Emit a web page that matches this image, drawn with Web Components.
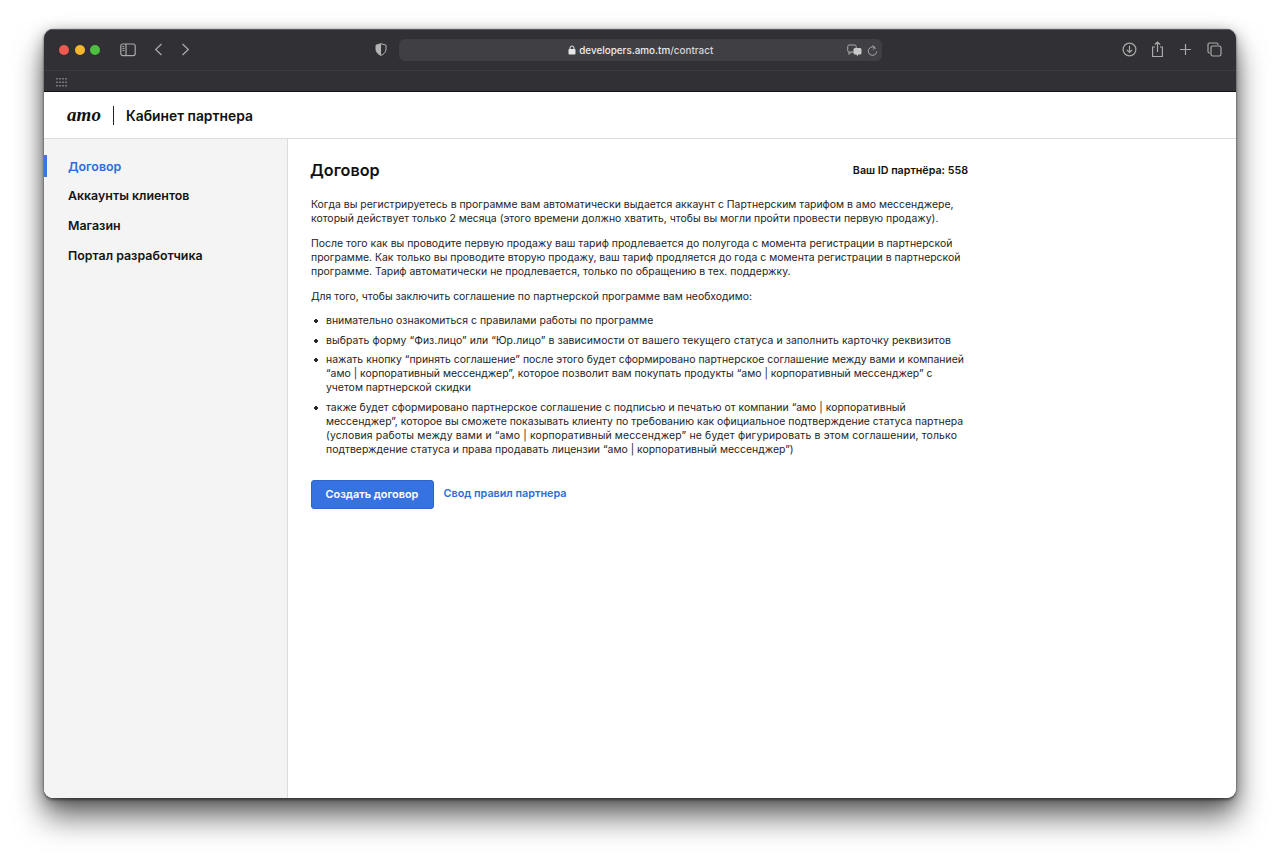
<!DOCTYPE html>
<html lang="ru"><head><meta charset="utf-8"><title>Договор</title>
<style>
html,body{margin:0;padding:0;background:#fff}
body{font-family:Inter,"Liberation Sans",sans-serif;width:1280px;height:856px;overflow:hidden}
</style></head><body>
<browser-window>
  <browser-toolbar slot="toolbar" url-host="developers.amo.tm" url-path="/contract"></browser-toolbar>
  <partner-header></partner-header>
  <div style="display:flex;flex:1;min-height:0">
    <partner-nav>
      <nav-item active>Договор</nav-item>
      <nav-item>Аккаунты клиентов</nav-item>
      <nav-item>Магазин</nav-item>
      <nav-item>Портал разработчика</nav-item>
    </partner-nav>
    <contract-page title-text="Договор" partner="Ваш ID партнёра: 558"></contract-page>
  </div>
</browser-window>
<script>
function def(name, html, extra){
  const t=document.createElement('template');t.innerHTML=html;
  customElements.define(name,class extends HTMLElement{
    connectedCallback(){ if(this.shadowRoot) return; this.attachShadow({mode:'open'}).appendChild(t.content.cloneNode(true)); if(extra) extra.call(this,this.shadowRoot);}
  });
}
def('browser-window',`<style>
:host{display:block;box-sizing:border-box;width:1280px;height:856px;padding:29px 44px 58px}
.w{height:769px;display:flex;flex-direction:column;border-radius:9px;overflow:hidden;background:#fff}
.s{height:769px;border-radius:9px;box-shadow:0 0 1px 0 rgba(40,40,40,.8),0 2px 3px rgba(0,0,0,.45),0 20px 30px rgba(0,0,0,.55),0 4px 16px rgba(0,0,0,.35)}
</style><div class="s"><div class="w"><slot name="toolbar"></slot><slot></slot></div></div>`);
const ic='fill="none" stroke="#a9a9ab" stroke-width="1.2"';
def('browser-toolbar',`<style>
:host{display:block;height:63px;background:#313034;color:#d9d9da;border-bottom:1px solid #111;box-sizing:border-box;box-shadow:inset 0 1px #59585c}
.top{height:41px;display:flex;align-items:center;position:relative;border-bottom:1px solid #3d3c40;padding:0 15px;box-sizing:content-box}
.l{width:10px;height:10px;border-radius:50%;margin-right:5.5px}
svg{display:block;flex:none}
.url{position:absolute;left:355px;top:10px;width:483px;height:22px;border-radius:6px;background:#403f44;display:flex;align-items:center;justify-content:center;font:500 9.9px/22px Inter,"Liberation Sans",sans-serif;color:#ececed}
.url span{color:#d6d6d8}
.url svg.lock{margin-right:3.5px}
.tr{position:absolute;left:448px;top:5px;display:flex;gap:5px;align-items:center}
.right{position:absolute;left:1078px;top:0;height:41px;display:flex;align-items:center;gap:13px}
.fav{height:20px;display:flex;align-items:center;padding:3px 0 0 12px;box-sizing:border-box}
</style>
<div class="top">
  <i class="l" style="background:#ee5a50"></i><i class="l" style="background:#f5b62f"></i><i class="l" style="background:#4fbf41;margin-right:0"></i>
  <svg style="position:absolute;left:76px;top:14px" width="16" height="14" viewBox="0 0 16 14" ${ic}><rect x=".8" y="1" width="14.4" height="11.6" rx="2"/><path d="M6 1v11.6" /><path d="M2.4 3.6h2M2.4 5.6h2M2.4 7.6h2" stroke-width="1"/></svg>
  <svg style="position:absolute;left:110px;top:14px" width="9" height="13" viewBox="0 0 9 13" fill="none" stroke="#a9a9ab" stroke-width="1.3"><path d="M7.5 1 1.7 6.5l5.8 5.5"/></svg>
  <svg style="position:absolute;left:137px;top:14px" width="9" height="13" viewBox="0 0 9 13" fill="none" stroke="#a9a9ab" stroke-width="1.3"><path d="M1.5 1l5.8 5.5L1.500 12"/></svg>
  <svg style="position:absolute;left:331px;top:14px" width="12" height="13" viewBox="0 0 12 13"><path d="M6 .7 11 2.200v4c0 3-2.200 5-5 6.200C3.200 11.200 1 9.200 1 6.200v-4z" fill="#313034" stroke="#b4b4b6" stroke-width="1"/><path d="M6 .7 1 2.200v4c0 3 2.200 5 5 6.200z" fill="#b4b4b6"/></svg>
  <div class="url">
    <svg class="lock" width="8" height="10" viewBox="0 0 8 10"><rect x=".5" y="4" width="7" height="5.500" rx="1" fill="#e8e8e9"/><path d="M2 4.500V3a2 2 0 0 1 4 0v1.500" fill="none" stroke="#e8e8e9" stroke-width="1"/></svg>
    <b style="font-weight:500" id="h"></b><span id="p"></span>
    <div class="tr" >
      <svg width="15" height="13" viewBox="0 0 15 13"><rect x=".7" y="1" width="8.500" height="7" rx="1.500" fill="none" stroke="#a9a9ab"/><path d="M2 8v2.500l2.500-2.500" fill="none" stroke="#a9a9ab"/><rect x="6.500" y="4" width="8" height="6.500" rx="1.500" fill="#c9c9cb"/><path d="M11 10v2.500l-2-2.500z" fill="#c9c9cb"/></svg>
      <svg width="11" height="12" viewBox="0 0 11 12" fill="none" stroke="#a9a9ab" stroke-width="1"><path d="M8.800 3.500A4.200 4.200 0 1 0 9.700 6.500"/><path d="M5.500 .5 8 2.500 5.800 4.700" /></svg>
    </div>
  </div>
  <div class="right">
    <svg width="15" height="15" viewBox="0 0 15 15" ${ic}><circle cx="7.500" cy="7.500" r="6.400"/><path d="M7.500 3.800v6.600M4.900 7.800l2.600 2.600 2.600-2.600"/></svg>
    <svg style="margin-left:1px" width="13" height="17" viewBox="0 0 13 17" ${ic}><path d="M4 6H1.600v9.500h9.800V6H9M6.500 11V1.200M3.800 3.500 6.500 1l2.700 2.500"/></svg>
    <svg style="margin-left:2px" width="13" height="13" viewBox="0 0 13 13" ${ic}><path d="M6.500 1v11M1 6.500h11"/></svg>
    <svg style="margin-left:2px" width="15" height="15" viewBox="0 0 15 15" ${ic}><path d="M3 11H2.500A1.500 1.500 0 0 1 1 9.500v-7A1.500 1.500 0 0 1 2.500 1h7A1.500 1.500 0 0 1 11 2.500V3"/><rect x="4" y="4" width="10" height="10" rx="1.800"/></svg>
  </div>
</div>
<div class="fav"><svg width="11" height="9" viewBox="0 0 11 9" fill="#77777a"><path d="M0 0h2v1.500H0zM3 0h2v1.500H3zM6 0h2v1.500H6zM9 0h2v1.500H9zM0 3.500h2V5H0zM3 3.500h2V5H3zM6 3.500h2V5H6zM9 3.500h2V5H9zM0 7h2v1.500H0zM3 7h2v1.500H3zM6 7h2v1.500H6zM9 7h2v1.500H9z"/></svg></div>`,
function(r){r.getElementById('h').textContent=this.getAttribute('url-host');r.getElementById('p').textContent=this.getAttribute('url-path');});
def('partner-header',`<style>
:host{display:flex;align-items:center;height:47px;flex:none;box-sizing:border-box;border-bottom:1px solid #dcdcdc;background:#fff;padding:2px 0 0 23px}
.logo{font:italic 700 19px/1 "Liberation Serif",serif;letter-spacing:.1px;color:#111;width:35px;padding-bottom:4px}
.d{width:1px;height:19px;background:#222;margin:-2px 12px 0 11px}
.t{font:600 13.850px/1 Inter,"Liberation Sans",sans-serif;color:#111;padding-top:1px}
</style><span class="logo">amo</span><i class="d"></i><span class="t">Кабинет партнера</span>`);
def('partner-nav',`<style>
:host{display:block;width:244px;flex:none;box-sizing:border-box;background:#f4f4f4;border-right:1px solid #dcdcdc;padding-top:12.500px}
</style><slot></slot>`);
def('nav-item',`<style>
:host{display:block;height:29.700px;padding-left:24px;font:600 12.400px/29.600px Inter,"Liberation Sans",sans-serif;color:#141414;position:relative}
:host([active]){color:#2a6de0}
:host([active])::before{content:"";position:absolute;left:0;top:3.500px;width:3px;height:22px;background:#3b74e4}
</style><slot></slot>`);
def('contract-page',`<style>
:host{display:block;flex:1;padding:22px 0 0 23px;box-sizing:border-box;font:400 10.450px/14.100px Inter,"Liberation Sans",sans-serif;color:#252525}
.c{width:657px;white-space:nowrap}
.h{display:flex;justify-content:space-between;align-items:center;height:19px;margin-bottom:18px}
h1{margin:0 0 0 -1px;font:600 16.200px/19px Inter,"Liberation Sans",sans-serif;color:#111}
.id{font:600 10.700px/19px Inter,"Liberation Sans",sans-serif;color:#111}
p{margin:0 0 10.600px}
ul{margin:0 0 22.500px;padding:0;list-style:none}
li{margin:0 0 5.300px;padding-left:15px;background:radial-gradient(circle 2px at 5px 7px,#252525 90%,transparent) no-repeat}
.a{display:flex;align-items:center;gap:9.500px}
.b{width:123px;height:29px;box-sizing:border-box;background:#3672e2;border:1px solid #2e63c8;border-radius:3px;color:#fff;font:600 10.900px/27px Inter,"Liberation Sans",sans-serif;text-align:center;padding-right:1px}
a{color:#2a6de0;font:600 10.800px/14px Inter,"Liberation Sans",sans-serif;text-decoration:none}
.w1{letter-spacing:.065px}
.w2{letter-spacing:.145px}
</style><div class="c">
<div class="h"><h1 id="t"></h1><span class="id" id="i"></span></div>
<p>Когда вы регистрируетесь в программе вам автоматически выдается аккаунт с Партнерским тарифом в амо мессенджере,<br>который действует только 2 месяца (этого времени должно хватить, чтобы вы могли пройти провести первую продажу).</p>
<p>После того как вы проводите первую продажу ваш тариф продлевается до полугода с момента регистрации в партнерской<br>программе. Как только вы проводите вторую продажу, ваш тариф продляется до года с момента регистрации в партнерской<br>программе. Тариф автоматически не продлевается, только по обращению в тех. поддержку.</p>
<p>Для того, чтобы заключить соглашение по партнерской программе вам необходимо:</p>
<ul>
<li>внимательно ознакомиться с правилами работы по программе</li>
<li><span class="w1">выбрать форму “Физ.лицо” или “Юр.лицо” в зависимости от вашего текущего статуса и заполнить карточку реквизитов</span></li>
<li>нажать кнопку “принять соглашение” после этого будет сформировано партнерское соглашение между вами и компанией<br>“амо | корпоративный мессенджер”, которое позволит вам покупать продукты “амо | корпоративный мессенджер” с<br>учетом партнерской скидки</li>
<li>также будет сформировано партнерское соглашение с подписью и печатью от компании “амо | корпоративный<br>мессенджер”, которое вы сможете показывать клиенту по требованию как официальное подтверждение статуса партнера<br><span class="w2">(условия работы между вами и “амо | корпоративный мессенджер” не будет фигурировать в этом соглашении, только</span><br>подтверждение статуса и права продавать лицензии “амо | корпоративный мессенджер”)</li>
</ul>
<div class="a"><span class="b">Создать договор</span><a href="#">Свод правил партнера</a></div>
</div>`,function(r){r.getElementById('t').textContent=this.getAttribute('title-text');r.getElementById('i').textContent=this.getAttribute('partner');});
</script>
</body></html>
